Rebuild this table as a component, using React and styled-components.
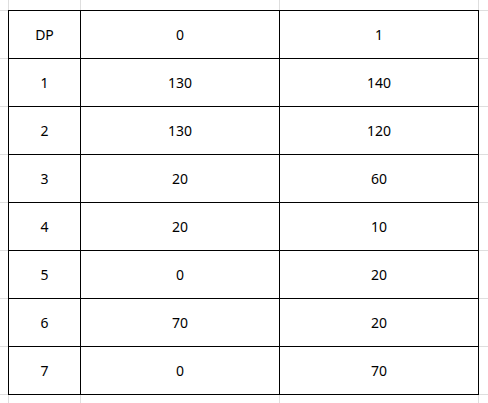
import React from "react";
import styled, { createGlobalStyle } from "styled-components";

const Global = createGlobalStyle`
  html, body { margin: 0; padding: 0; background: #fff; }
  * { box-sizing: border-box; }
`;

const GRID = "#dedede";

const Page = styled.div`
  width: 488px;
  height: 403px;
  overflow: hidden;
  padding: 10px 0 0 8px;
  background-color: #fff;
  background-image:
    linear-gradient(${GRID}, ${GRID}),
    linear-gradient(${GRID}, ${GRID}),
    linear-gradient(${GRID}, ${GRID}),
    linear-gradient(${GRID}, ${GRID}),
    linear-gradient(to bottom, ${GRID} 0, ${GRID} 1px, transparent 1px);
  background-size: 1px 100%, 1px 100%, 1px 100%, 1px 100%, 100% 48px;
  background-position: 8px 0, 80px 0, 279px 0, 478px 0, 0 10px;
  background-repeat: no-repeat, no-repeat, no-repeat, no-repeat, repeat-y;
  font-family: "Noto Sans", "Open Sans", sans-serif;
  font-size: 14px;
  color: #000;
`;

const Table = styled.div`
  display: grid;
  grid-template-columns: 72px 199px 199px;
  grid-auto-rows: 48px;
  width: max-content;
  border-left: 1px solid #000;
  border-top: 1px solid #000;
  background: #fff;
`;

const Cell = styled.div`
  display: flex;
  align-items: center;
  justify-content: center;
  border-right: 1px solid #000;
  border-bottom: 1px solid #000;
  line-height: 1;
`;

const rows = [
  ["DP", "0", "1"],
  ["1", "130", "140"],
  ["2", "130", "120"],
  ["3", "20", "60"],
  ["4", "20", "10"],
  ["5", "0", "20"],
  ["6", "70", "20"],
  ["7", "0", "70"],
];

export default function App() {
  return (
    <>
      <Global />
      <Page>
        <Table>
          {rows.map((r, i) =>
            r.map((v, j) => <Cell key={`${i}-${j}`}>{v}</Cell>)
          )}
        </Table>
      </Page>
    </>
  );
}
